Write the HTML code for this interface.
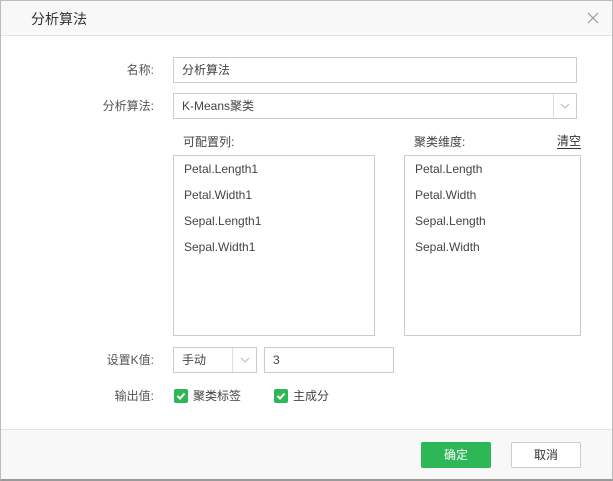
<!DOCTYPE html>
<html><head><meta charset="utf-8"><style>
*{box-sizing:border-box;margin:0;padding:0}
body{width:613px;height:481px;overflow:hidden;background:#fff;font-family:"Liberation Sans","Noto Sans CJK SC",sans-serif;font-size:12px;color:#333;position:relative}
.frame{position:absolute;left:0;top:0;width:613px;height:481px;border:1px solid #bbb;border-bottom:2px solid #999}
.hdr{position:absolute;left:1px;top:1px;width:611px;height:35px;background:#f8f8f8;border-bottom:1px solid #e3e3e3}
.hdr span{position:absolute;left:30px;top:9px;font-size:14px;color:#333;line-height:18px}
.ftr{position:absolute;left:1px;top:429px;width:611px;height:50px;background:#f8f8f8;border-top:1px solid #e3e3e3}
.a{position:absolute}
.box{position:absolute;border:1px solid #ccc;background:#fff}
.lbl{position:absolute;right:459px;text-align:right;color:#555;line-height:14px}
.t{position:absolute;color:#444;line-height:14px}
.chk{position:absolute;width:14px;height:14px;background:#2db757;border-radius:2px}
.btn{position:absolute;height:26px;line-height:24px;text-align:center;font-size:12px;border-radius:2px}
</style></head><body>
<div class="frame"></div>
<div class="hdr"><span>分析算法</span>
<svg class="a" style="left:585px;top:10px" width="14" height="14"><path d="M2 2L12 12M12 2L2 12" stroke="#999" stroke-width="1.2"/></svg></div>

<div class="lbl" style="top:63px">名称:</div>
<div class="box" style="left:173px;top:57px;width:404px;height:26px"></div>
<div class="t" style="left:182px;top:63px">分析算法</div>

<div class="lbl" style="top:99px">分析算法:</div>
<div class="box" style="left:173px;top:93px;width:404px;height:26px"></div>
<div class="a" style="left:553px;top:94px;width:1px;height:24px;background:#ddd"></div>
<svg class="a" style="left:560px;top:102px" width="10" height="8"><path d="M1 2L5 6L9 2" stroke="#bbb" fill="none"/></svg>
<div class="t" style="left:182px;top:99px">K-Means聚类</div>

<div class="t" style="left:183px;top:135px">可配置列:</div>
<div class="t" style="left:414px;top:135px">聚类维度:</div>
<div class="t" style="left:557px;top:134px;color:#333;border-bottom:1px solid #333;line-height:14px">清空</div>

<div class="box" style="left:173px;top:155px;width:202px;height:181px"></div>
<div class="t" style="left:184px;top:162px">Petal.Length1</div>
<div class="t" style="left:184px;top:188px">Petal.Width1</div>
<div class="t" style="left:184px;top:214px">Sepal.Length1</div>
<div class="t" style="left:184px;top:240px">Sepal.Width1</div>

<div class="box" style="left:404px;top:155px;width:177px;height:181px"></div>
<div class="t" style="left:415px;top:162px">Petal.Length</div>
<div class="t" style="left:415px;top:188px">Petal.Width</div>
<div class="t" style="left:415px;top:214px">Sepal.Length</div>
<div class="t" style="left:415px;top:240px">Sepal.Width</div>

<div class="lbl" style="top:353px">设置K值:</div>
<div class="box" style="left:173px;top:347px;width:84px;height:26px"></div>
<div class="a" style="left:232px;top:348px;width:1px;height:24px;background:#ddd"></div>
<svg class="a" style="left:240px;top:356px" width="10" height="8"><path d="M1 2L5 6L9 2" stroke="#bbb" fill="none"/></svg>
<div class="t" style="left:182px;top:353px">手动</div>
<div class="box" style="left:264px;top:347px;width:130px;height:26px"></div>
<div class="t" style="left:273px;top:353px">3</div>

<div class="lbl" style="top:389px">输出值:</div>
<div class="chk" style="left:174px;top:389px"></div>
<svg class="a" style="left:174px;top:389px" width="14" height="14"><path d="M3.5 7L6 9.5L10.5 4.5" stroke="#fff" stroke-width="2" fill="none"/></svg>
<div class="t" style="left:193px;top:389px">聚类标签</div>
<div class="chk" style="left:274px;top:389px"></div>
<svg class="a" style="left:274px;top:389px" width="14" height="14"><path d="M3.5 7L6 9.5L10.5 4.5" stroke="#fff" stroke-width="2" fill="none"/></svg>
<div class="t" style="left:293px;top:389px">主成分</div>

<div class="ftr"></div>
<div class="btn" style="left:421px;top:442px;width:70px;background:#2db757;color:#fff;border:1px solid #2db757">确定</div>
<div class="btn" style="left:511px;top:442px;width:70px;background:#fff;color:#333;border:1px solid #ccc">取消</div>
</body></html>
